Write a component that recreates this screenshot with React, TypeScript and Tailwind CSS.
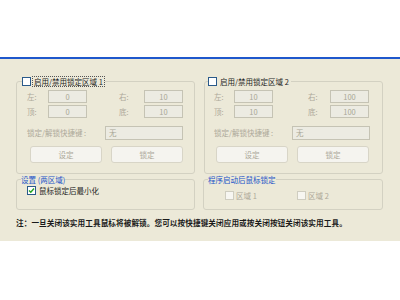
import React from 'react';

const FONT = { fontFamily: '"Noto Sans CJK SC", "Noto Sans", sans-serif' };

function Box({ checked, disabled }: { checked?: boolean; disabled?: boolean }) {
  return (
    <span
      className={`inline-flex items-center justify-center w-[9px] h-[9px] border shrink-0 ${
        disabled ? 'border-[#cfcdc0] bg-[#f7f6f1]' : 'border-[#2a5a8a] bg-white'
      }`}
    >
      {checked && (
        <svg width="7" height="7" viewBox="0 0 7 7">
          <path d="M1 3.5 L2.8 5.3 L6 1.5" stroke="#22a222" strokeWidth="1.4" fill="none" />
        </svg>
      )}
    </span>
  );
}

function Field({ value, w, align = 'center' }: { value: string; w: number; align?: 'center' | 'left' }) {
  return (
    <div
      className={`h-full border border-[#c5c3b4] bg-[#ecebe2] text-[#a9a796] flex items-center ${
        align === 'center' ? 'justify-center' : 'justify-start pl-[3px] text-[#8d8b7c]'
      }`}
      style={{ width: w }}
    >
      {value}
    </div>
  );
}

interface Region {
  n: number;
  focused: boolean;
  left: string[];
  right: string[];
  pl: number;
  labelW: number;
  midGap: number;
  rightLabelW: number;
  keyLabelW: number;
  keyW: number;
  btnGap: number;
  btnPl: number;
}

function RegionBox({ r }: { r: Region }) {
  return (
    <fieldset
      className="w-[179px] border border-[#d3d1c2] rounded-[3px] pb-[10px] pt-[3px] shrink-0"
      style={{ paddingLeft: r.pl }}
    >
      <legend
        className="flex items-center gap-[1px] h-[11px] text-[7.5px] text-[#1e1e1e]"
        style={{ marginLeft: -r.pl + (r.n === 1 ? 5 : 3) }}
      >
        <Box />
        <span
          className={`border px-[1px] leading-[9px] ${r.focused ? 'border-dotted border-[#555]' : 'border-transparent'}`}
        >
          启用/禁用锁定区域 {r.n}
        </span>
      </legend>
      <div className="flex flex-col text-[7.5px] text-[#aca899]">
        {[0, 1].map((i) => (
          <div key={i} className={`flex items-center h-[13px] ${i === 1 ? 'mt-[2px]' : ''}`}>
            <span style={{ width: r.labelW }}>{i === 0 ? '左:' : '顶:'}</span>
            <Field value={r.left[i]} w={39} />
            <span style={{ width: r.midGap }} />
            <span style={{ width: r.rightLabelW }}>{i === 0 ? '右:' : '底:'}</span>
            <Field value={r.right[i]} w={39} />
          </div>
        ))}
        <div className="flex items-center h-[14px] mt-[8px]">
          <span style={{ width: r.keyLabelW }}>锁定/解锁快捷键 :</span>
          <Field value="无" w={r.keyW} align="left" />
        </div>
        <div className="flex h-[17px] mt-[6px]" style={{ paddingLeft: r.btnPl, gap: r.btnGap }}>
          {['设定', '锁定'].map((t) => (
            <div
              key={t}
              className="w-[72px] h-full rounded-[3px] border border-[#d8d5c7] bg-[#f5f4ef] flex items-center justify-center text-[#aca899]"
            >
              {t}
            </div>
          ))}
        </div>
      </div>
    </fieldset>
  );
}

const regions: Region[] = [
  { n: 1, focused: true, left: ['0', '0'], right: ['10', '10'], pl: 10, labelW: 21, midGap: 32, rightLabelW: 25, keyLabelW: 78, keyW: 78, btnGap: 9, btnPl: 3 },
  { n: 2, focused: false, left: ['10', '10'], right: ['100', '100'], pl: 9, labelW: 20, midGap: 35, rightLabelW: 22, keyLabelW: 78, keyW: 78, btnGap: 9, btnPl: 2 },
];

export default function App() {
  return (
    <div className="w-[400px] h-[300px] bg-white flex flex-col" style={FONT}>
      <div className="h-[57px] bg-white shrink-0" />
      <div className="h-[2px] bg-[#1f58cc] shrink-0" />
      <div className="h-[182px] bg-[#ece9d8] shrink-0 flex flex-col px-[16px] pt-[17px]">
        <div className="flex gap-[9px]">
          <RegionBox r={regions[0]} />
          <RegionBox r={regions[1]} />
        </div>
        <div className="flex gap-[8px] mt-[1px]">
          <fieldset className="w-[179px] h-[35px] border border-[#d3d1c2] rounded-[3px] pl-[10px]">
            <legend className="-ml-[6px] text-[7.5px] text-[#2455c8] leading-[9px]">设置 (两区域)</legend>
            <div className="flex items-center gap-[3px] mt-[1px] text-[7.5px] text-[#1e1e1e]">
              <Box checked />
              <span>鼠标锁定后最小化</span>
            </div>
          </fieldset>
          <fieldset className="w-[180px] h-[35px] border border-[#d3d1c2] rounded-[3px] pl-[21px]">
            <legend className="-ml-[17px] text-[7.5px] text-[#2455c8] leading-[9px]">程序启动后鼠标锁定</legend>
            <div className="flex items-center mt-[6px] text-[7.5px] text-[#aca899]">
              <div className="flex items-center gap-[2px] w-[72px]">
                <Box disabled />
                <span>区域 1</span>
              </div>
              <div className="flex items-center gap-[2px]">
                <Box disabled />
                <span>区域 2</span>
              </div>
            </div>
          </fieldset>
        </div>
        <p className="mt-[7px] text-[7.6px] text-[#1a1a1a] font-semibold tracking-[0.1px]">
          注：一旦关闭该实用工具鼠标将被解锁。您可以按快捷键关闭应用或按关闭按钮关闭该实用工具。
        </p>
      </div>
      <div className="flex-1 bg-white" />
    </div>
  );
}
